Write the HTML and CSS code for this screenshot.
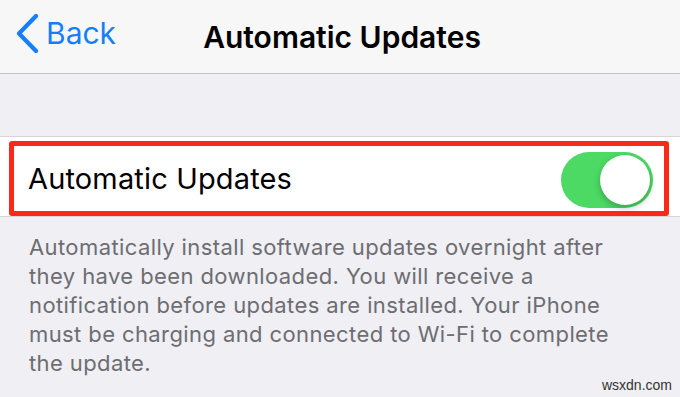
FILE: index.html
```html
<!DOCTYPE html>
<html>
<head>
<meta charset="utf-8">
<link rel="stylesheet" href="styles.css">
</head>
<body>
<header class="nav">
  <a class="back">
    <svg class="chev" width="26" height="40" viewBox="0 0 26 40"><polyline points="21,3 4,20.5 21,38" fill="none" stroke="#157efb" stroke-width="4.2" stroke-linecap="round" stroke-linejoin="round"/></svg>
    <span>Back</span>
  </a>
  <h1 class="title">Automatic Updates</h1>
</header>
<div class="gap"></div>
<section class="group">
  <div class="row highlight">
    <span class="label">Automatic Updates</span>
    <span class="switch"><span class="knob"></span></span>
  </div>
</section>
<p class="footer">Automatically install software updates overnight after they have been downloaded. You will receive a notification before updates are installed. Your iPhone must be charging and connected to Wi-Fi to complete the update.</p>
<div class="mark">wsxdn.com</div>
</body>
</html>
```
FILE: styles.css
```css
html, body {
  margin: 0;
  padding: 0;
}
body {
  width: 680px;
  height: 397px;
  overflow: hidden;
  background: #efeff4;
  font-family: Inter, "Noto Sans", sans-serif;
  position: relative;
}
.nav {
  height: 73px;
  background: #f7f7f8;
  border-bottom: 1px solid #c4c4c8;
  display: flex;
  align-items: center;
  justify-content: center;
  position: relative;
}
.back {
  position: absolute;
  left: 15px;
  top: 13px;
  display: flex;
  align-items: center;
  gap: 5px;
  color: #157efb;
  font-size: 30px;
}
.title {
  margin: 0 0 0 4px;
  font-size: 30px;
  font-weight: 600;
  color: #000;
}
.gap {
  height: 62px;
}
.group {
  background: #fff;
  border-top: 1px solid #d6d6da;
  border-bottom: 1px solid #d6d6da;
  padding-top: 4px;
}
.row {
  height: 65px;
  margin: 0 11px 0 9px;
  border: 5px solid #fb2a18;
  border-radius: 3px;
  display: flex;
  align-items: center;
  justify-content: space-between;
  padding: 0 11px 0 14px;
}
.label {
  font-size: 29px;
  color: #000;
  letter-spacing: 0.15px;
}
.switch {
  width: 92px;
  height: 56px;
  border-radius: 28px;
  background: #4cd964;
  display: flex;
  align-items: center;
  justify-content: flex-end;
  margin-top: 2px;
}
.knob {
  width: 50px;
  height: 50px;
  border-radius: 50%;
  background: #fff;
  margin-right: 3px;
  box-shadow: 0 3px 6px rgba(0,0,0,0.25);
}
.footer {
  margin: 16px 51px 0 29px;
  font-size: 22px;
  line-height: 29px;
  letter-spacing: 0.4px;
  color: #6d6d72;
}
.mark {
  position: absolute;
  right: 8px;
  bottom: 4px;
  font-family: "Liberation Sans", sans-serif;
  font-size: 14px;
  color: #333;
}
```
